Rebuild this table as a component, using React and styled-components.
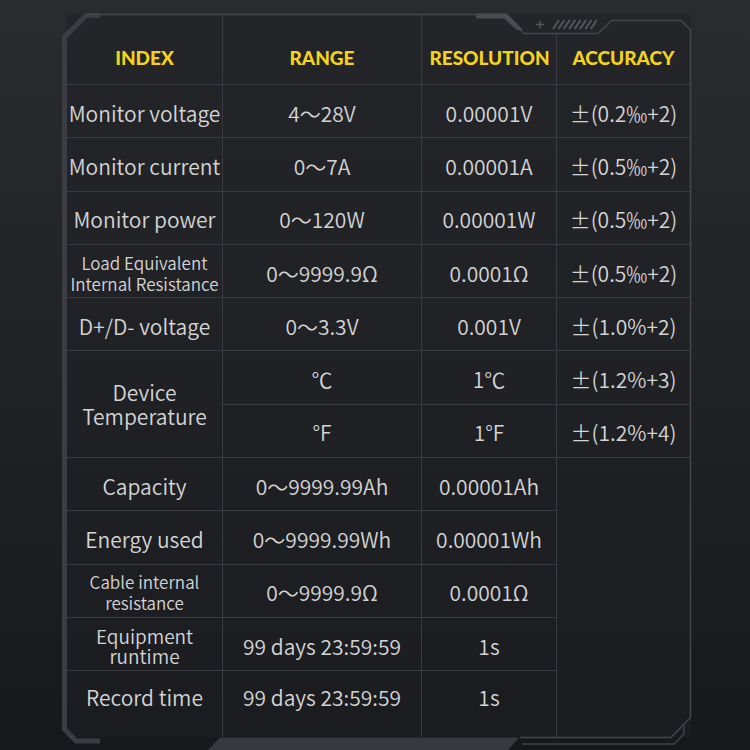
import React from 'react';
import styled, { createGlobalStyle } from 'styled-components';

const GlobalStyle = createGlobalStyle`
  html, body {
    margin: 0;
    padding: 0;
    background: #1d1e21;
  }
`;

const Page = styled.div`
  width: 750px;
  height: 750px;
  overflow: hidden;
  box-sizing: border-box;
  padding: 14px 0 0 62px;
  background: linear-gradient(180deg, #2a2b2f 0%, #222327 45%, #17181b 100%);
  font-family: "Noto Sans CJK SC", "Noto Sans", sans-serif;
`;

const Frame = styled.div`
  position: relative;
  width: 629px;
  height: 736px;
`;

const FrameLines = styled.svg`
  position: absolute;
  left: -62px;
  top: -14px;
  width: 750px;
  height: 750px;
  pointer-events: none;
`;

const Table = styled.div`
  margin-left: 5px;
  display: grid;
  grid-template-columns: 156px 199px 135px 133px;
  grid-template-rows: 71px repeat(11, 53.3px) 66px;
  background: linear-gradient(180deg, #242529 0%, #202125 50%, #1b1c20 100%);
`;

const Head = styled.div`
  position: relative;
  display: flex;
  align-items: center;
  justify-content: center;
  padding-top: 17px;
  box-sizing: border-box;
  border-bottom: 1px solid #3a3b40;
  border-right: ${p => (p.$last || p.$notch ? 'none' : '1px solid #3a3b40')};
  font-family: Lato, "Noto Sans", sans-serif;
  font-weight: 900;
  font-size: 19px;
  color: #f4d31c;
  white-space: nowrap;
  &::after {
    content: '';
    display: ${p => (p.$notch ? 'block' : 'none')};
    position: absolute;
    right: 0;
    top: 20px;
    bottom: 0;
    width: 1px;
    background: #3a3b40;
  }
`;

const Cell = styled.div`
  display: flex;
  align-items: center;
  justify-content: center;
  text-align: center;
  box-sizing: border-box;
  grid-row: ${p => (p.$span ? `span ${p.$span}` : 'auto')};
  border-bottom: ${p => (p.$end ? 'none' : '1px solid #3a3b40')};
  border-right: ${p => (p.$last ? 'none' : '1px solid #3a3b40')};
  padding-top: ${p => (p.$span ? '0' : '3px')};
  padding-bottom: ${p => (p.$end ? '17px' : '0')};
  color: #d4d4d4;
  font-weight: 350;
  font-size: ${p => p.$size || 21}px;
  line-height: ${p => p.$lh || 24}px;
  white-space: pre-line;
`;

const Blank = styled.div`
  grid-row: span 5;
`;

const rows = [
  { name: 'Monitor voltage', range: '4～28V', res: '0.00001V', acc: '±(0.2‰+2)' },
  { name: 'Monitor current', range: '0～7A', res: '0.00001A', acc: '±(0.5‰+2)' },
  { name: 'Monitor power', range: '0～120W', res: '0.00001W', acc: '±(0.5‰+2)' },
  { name: 'Load Equivalent\nInternal Resistance', size: 17, lh: 21, range: '0～9999.9Ω', res: '0.0001Ω', acc: '±(0.5‰+2)' },
  { name: 'D+/D- voltage', range: '0～3.3V', res: '0.001V', acc: '±(1.0%+2)' },
  { name: 'Device\nTemperature', span: 2, range: '℃', res: '1℃', acc: '±(1.2%+3)' },
  { range: '°F', res: '1°F', acc: '±(1.2%+4)' },
  { name: 'Capacity', range: '0～9999.99Ah', res: '0.00001Ah', blank: true },
  { name: 'Energy used', range: '0～9999.99Wh', res: '0.00001Wh' },
  { name: 'Cable internal\nresistance', size: 17, lh: 21, range: '0～9999.9Ω', res: '0.0001Ω' },
  { name: 'Equipment\nruntime', size: 19, lh: 20, range: '99 days 23:59:59', res: '1s' },
  { name: 'Record time', range: '99 days 23:59:59', res: '1s', end: true },
];

const Outline = () => (
  <FrameLines viewBox="0 0 750 750">
    <g fill="none" strokeLinejoin="miter">
      <polyline points="64.5,728 64.5,37 86,15.5 100,15.5" stroke="#3c3d42" strokeWidth="5" />
      <polyline points="64.5,700 64.5,729 76,741 100,741" stroke="#3c3d42" strokeWidth="5" />
      <path d="M86 14.5 H505 L524 33.5 H598 L611.5 20.5 H681 L690.5 30 V717.5 L671 737.5 H520" stroke="#45464b" strokeWidth="1.5" />
      <path d="M522 744 H674 L684 734 V724" stroke="#3f4045" strokeWidth="1.5" />
    </g>
    <polygon points="476,13.5 507,13.5 523,30 517,30 504,18.5 476,18.5" fill="#4b4c51" />
    <polygon points="208,750 220,737.5 519,737.5 508,750" fill="#38393e" />
    <g stroke="#55565b" strokeWidth="1.4">
      <line x1="536" y1="24.5" x2="544" y2="24.5" />
      <line x1="540" y1="20.5" x2="540" y2="28.5" />
    </g>
    <g stroke="#55565b" strokeWidth="2">
      {[0, 1, 2, 3, 4, 5, 6, 7].map(i => (
        <line key={i} x1={553 + i * 5.4} y1="29" x2={559 + i * 5.4} y2="20" />
      ))}
    </g>
  </FrameLines>
);

const App = () => (
  <Page>
    <GlobalStyle />
    <Frame>
      <Table>
        <Head>INDEX</Head>
        <Head>RANGE</Head>
        <Head $notch>RESOLUTION</Head>
        <Head $last>ACCURACY</Head>
        {rows.map((r, i) => (
          <React.Fragment key={i}>
            {r.name && (
              <Cell $span={r.span} $size={r.size} $lh={r.lh} $end={r.end}>{r.name}</Cell>
            )}
            <Cell $end={r.end}>{r.range}</Cell>
            <Cell $end={r.end}>{r.res}</Cell>
            {r.acc && <Cell $last>{r.acc}</Cell>}
            {r.blank && <Blank />}
          </React.Fragment>
        ))}
      </Table>
      <Outline />
    </Frame>
  </Page>
);

export default App;
